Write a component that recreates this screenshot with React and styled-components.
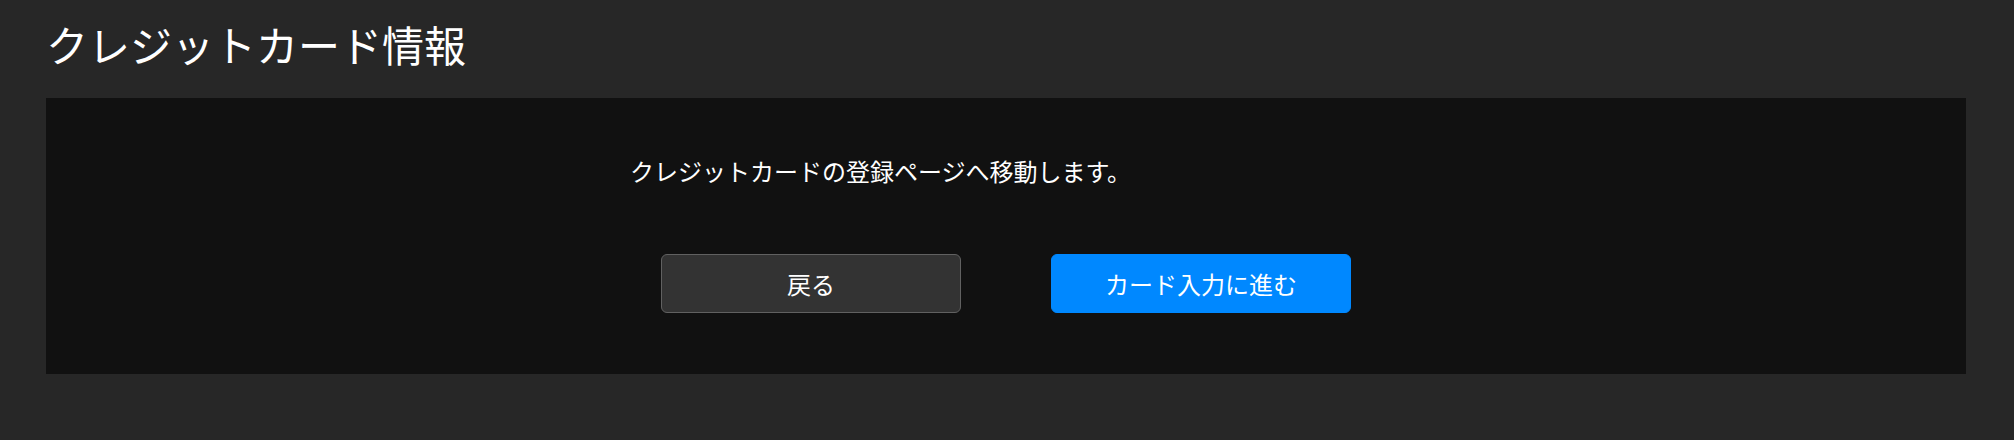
import React from "react";
import styled, { createGlobalStyle } from "styled-components";

const GlobalStyle = createGlobalStyle`
  html, body {
    margin: 0;
    padding: 0;
    background: #272727;
  }
  body {
    font-family: "Noto Sans CJK JP", "Noto Sans", sans-serif;
    color: #ffffff;
  }
`;

const Page = styled.div`
  padding: 0 48px 66px 46px;
  min-height: 440px;
  box-sizing: border-box;
`;

const Title = styled.h1`
  margin: 0;
  padding: 19px 0 30px;
  font-size: 42px;
  line-height: 49px;
  font-weight: 400;
  color: #ffffff;
`;

const Panel = styled.section`
  background: #111111;
  height: 276px;
  box-sizing: border-box;
  padding-top: 55px;
  display: flex;
  justify-content: center;
`;

const Content = styled.div`
  width: 752px;
  display: flex;
  flex-direction: column;
`;

const Message = styled.p`
  margin: 0;
  font-size: 24px;
  line-height: 36px;
  color: #ffffff;
  text-align: left;
`;

const Actions = styled.div`
  display: flex;
  justify-content: center;
  gap: 90px;
  margin-top: 65px;
`;

const Button = styled.button`
  width: 300px;
  height: 59px;
  box-sizing: border-box;
  border-radius: 6px;
  font-family: "Noto Sans CJK JP", "Noto Sans", sans-serif;
  font-size: 24px;
  line-height: 1;
  color: #ffffff;
  cursor: pointer;
  border: 1px solid ${(p) => (p.$primary ? "#0088ff" : "#616161")};
  background: ${(p) => (p.$primary ? "#0088ff" : "#333333")};
  padding: 0;
`;

export default function App() {
  return (
    <>
      <GlobalStyle />
      <Page>
        <Title>クレジットカード情報</Title>
        <Panel>
          <Content>
            <Message>クレジットカードの登録ページへ移動します。</Message>
            <Actions>
              <Button>戻る</Button>
              <Button $primary>カード入力に進む</Button>
            </Actions>
          </Content>
        </Panel>
      </Page>
    </>
  );
}
